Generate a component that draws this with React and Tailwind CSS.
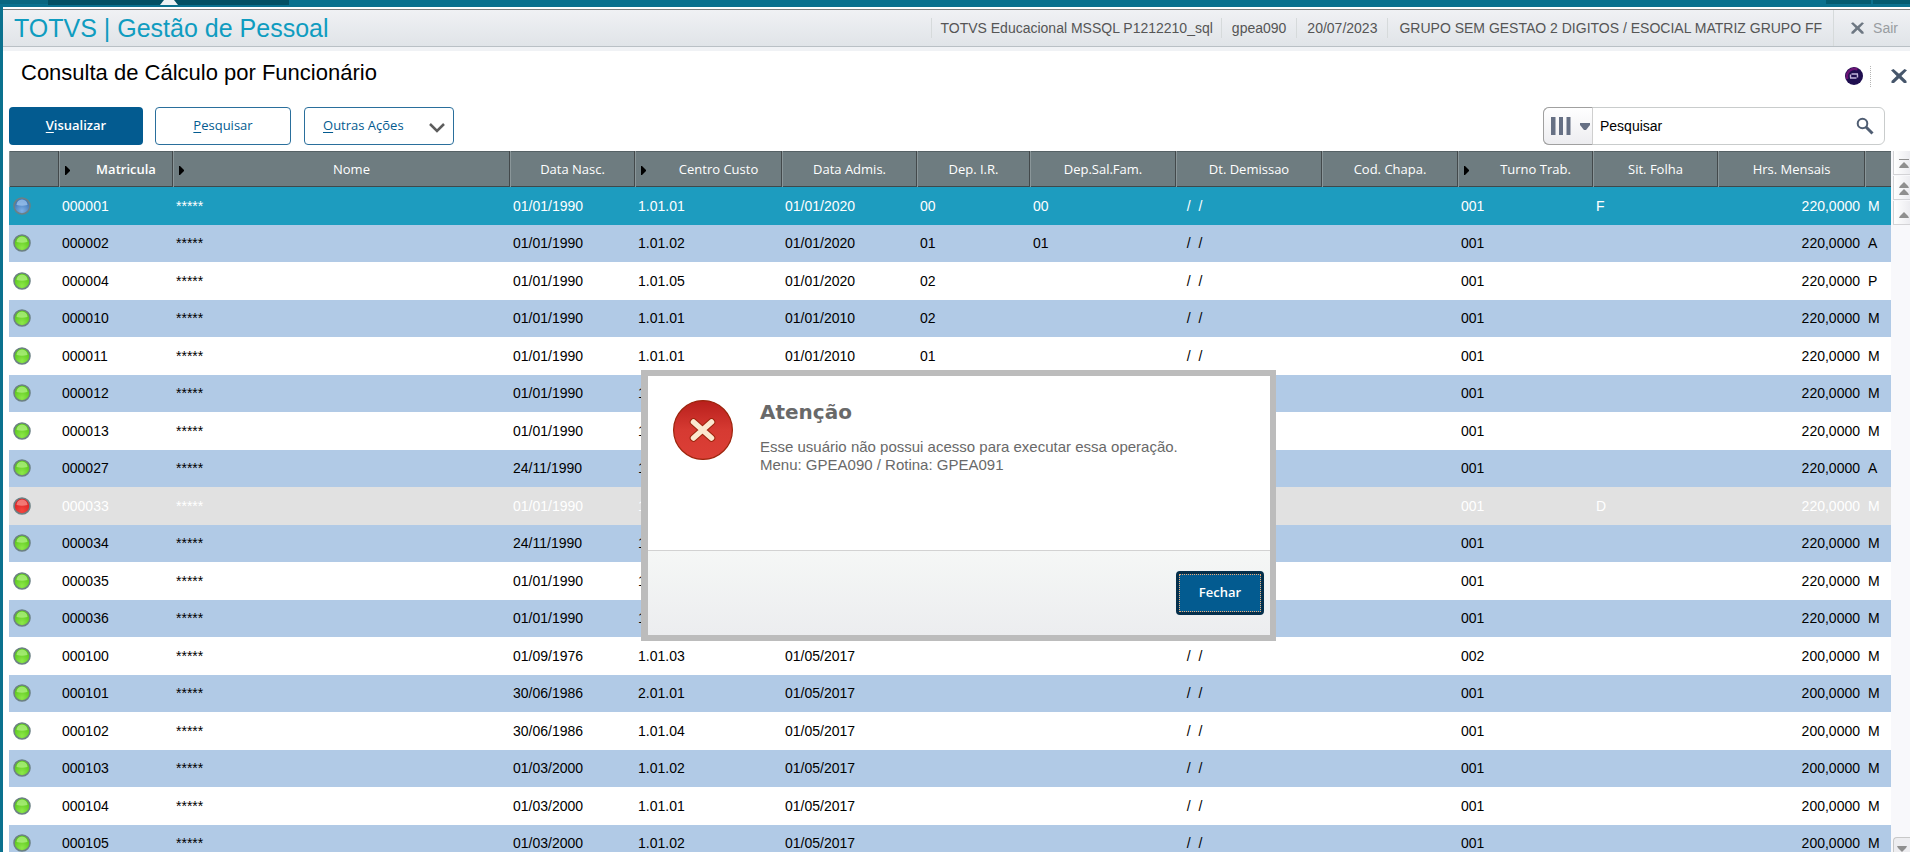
import React from 'react'
import clsx from 'clsx'

const COLUMNS = [
  { label: '', width: 'w-[50px]' },
  { label: 'Matricula', width: 'w-[114px]', arrow: true, bold: true },
  { label: 'Nome', width: '', arrow: true },
  { label: 'Data Nasc.', width: 'w-[125px]' },
  { label: 'Centro Custo', width: 'w-[147px]', arrow: true },
  { label: 'Data Admis.', width: 'w-[135px]' },
  { label: 'Dep. I.R.', width: 'w-[113px]' },
  { label: 'Dep.Sal.Fam.', width: 'w-[146px]' },
  { label: 'Dt. Demissao', width: 'w-[146px]' },
  { label: 'Cod. Chapa.', width: 'w-[136px]' },
  { label: 'Turno Trab.', width: 'w-[135px]', arrow: true },
  { label: 'Sit. Folha', width: 'w-[125px]' },
  { label: 'Hrs. Mensais', width: 'w-[147px]' },
  { label: '', width: 'w-[26px]' },
]

// status, matricula, nascimento, centro de custo, admissao, dep. ir, dep. sal. fam., turno, situacao, horas, categoria
const ROWS = [
  ['blue', '000001', '01/01/1990', '1.01.01', '01/01/2020', '00', '00', '001', 'F', '220,0000', 'M'],
  ['green', '000002', '01/01/1990', '1.01.02', '01/01/2020', '01', '01', '001', '', '220,0000', 'A'],
  ['green', '000004', '01/01/1990', '1.01.05', '01/01/2020', '02', '', '001', '', '220,0000', 'P'],
  ['green', '000010', '01/01/1990', '1.01.01', '01/01/2010', '02', '', '001', '', '220,0000', 'M'],
  ['green', '000011', '01/01/1990', '1.01.01', '01/01/2010', '01', '', '001', '', '220,0000', 'M'],
  ['green', '000012', '01/01/1990', '1.01.01', '', '', '', '001', '', '220,0000', 'M'],
  ['green', '000013', '01/01/1990', '1.01.01', '', '', '', '001', '', '220,0000', 'M'],
  ['green', '000027', '24/11/1990', '1.01.01', '', '', '', '001', '', '220,0000', 'A'],
  ['red', '000033', '01/01/1990', '1.01.01', '', '', '', '001', 'D', '220,0000', 'M'],
  ['green', '000034', '24/11/1990', '1.01.01', '', '', '', '001', '', '220,0000', 'M'],
  ['green', '000035', '01/01/1990', '1.01.01', '', '', '', '001', '', '220,0000', 'M'],
  ['green', '000036', '01/01/1990', '1.01.01', '', '', '', '001', '', '220,0000', 'M'],
  ['green', '000100', '01/09/1976', '1.01.03', '01/05/2017', '', '', '002', '', '200,0000', 'M'],
  ['green', '000101', '30/06/1986', '2.01.01', '01/05/2017', '', '', '001', '', '200,0000', 'M'],
  ['green', '000102', '30/06/1986', '1.01.04', '01/05/2017', '', '', '001', '', '200,0000', 'M'],
  ['green', '000103', '01/03/2000', '1.01.02', '01/05/2017', '', '', '001', '', '200,0000', 'M'],
  ['green', '000104', '01/03/2000', '1.01.01', '01/05/2017', '', '', '001', '', '200,0000', 'M'],
  ['green', '000105', '01/03/2000', '1.01.02', '01/05/2017', '', '', '001', '', '200,0000', 'M'],
]

const BALL_COLORS = {
  blue: ['#4179b8', '#7fb0e6', '#a5cbf2'],
  green: ['#5cc81c', '#8de84a', '#b8f48c'],
  red: ['#dd2424', '#f4473f', '#f99a94'],
}

function BallGradients() {
  return (
    <svg className="absolute size-0" aria-hidden="true">
      <defs>
        {Object.entries(BALL_COLORS).map(([name, [dark, light]]) => (
          <radialGradient key={name} id={`ball-${name}`} cx="0.5" cy="0.8" r="0.6">
            <stop offset="0" stopColor={light} />
            <stop offset="1" stopColor={dark} />
          </radialGradient>
        ))}
      </defs>
    </svg>
  )
}

function StatusBall({ color }) {
  return (
    <svg viewBox="0 0 18 18" className="block size-[18px]" role="img" aria-label={color}>
      <circle cx="9" cy="9" r="8" fill={`url(#ball-${color})`} stroke="#6c8084" strokeWidth="1.6" />
      <path d="M3.500 8a5.500 5.500 0 0 1 11 0q-5.500 1.600-11 0z" fill={BALL_COLORS[color][2]} opacity="0.7" />
    </svg>
  )
}

function CrossIcon({ className }) {
  return (
    <svg viewBox="0 0 16 14" className={className} aria-hidden="true">
      <path
        d="M0 1.200L2.500 0 8 4.800 13.500 0 16 1.200 10.400 7 15.500 12v2h-2.500L8 9.200 3 14H.5v-2L5.600 7z"
        fill="currentColor"
      />
    </svg>
  )
}

function TopBar() {
  return (
    <div className="flex h-[7px] shrink-0 items-start bg-[#0b718e]">
      <span className="h-1 w-12 bg-[#0a6780]" />
      <span className="flex h-[5px] w-[241px] justify-center bg-[#045063]">
        <svg viewBox="0 0 18 5" className="h-[5px] w-[18px]" aria-hidden="true">
          <path d="M0 5l4-5h10L18 5z" fill="#eef1f3" />
        </svg>
      </span>
      <span className="ml-auto h-1 w-[45px] bg-[#045b70]" />
      <span className="ml-0.5 h-1 w-[37px] bg-[#045b70]" />
    </div>
  )
}

function AppHeader() {
  return (
    <header className="flex h-[44px] shrink-0 flex-col border-b-4 border-[#f0f2f5] bg-white pt-0.5">
      <div className="flex flex-1 items-center border-t border-b border-t-[#808080] border-b-[#b9c0c5] bg-linear-to-b from-[#f0f1f4] to-[#e0e4e8] text-sm text-[#555]">
        <h1 className="ml-[11px] text-[25px]/8 text-[#0f9cc0]">TOTVS | Gestão de Pessoal</h1>
        <span className="ml-auto border-l border-[#d6dadb] px-2">TOTVS Educacional MSSQL P1212210_sql</span>
        <span className="border-l border-[#d6dadb] px-[10px]">gpea090</span>
        <span className="border-l border-[#d6dadb] px-[10px]">20/07/2023</span>
        <span className="border-l border-[#d6dadb] px-[11px]">
          GRUPO SEM GESTAO 2 DIGITOS / ESOCIAL MATRIZ GRUPO FF
        </span>
        <button className="flex h-full items-center gap-[9px] border-l border-[#d6dadb] pr-3 pl-[17px] text-[#999da1]">
          <CrossIcon className="h-3 w-[13px] text-[#6d7782]" />
          Sair
        </button>
      </div>
    </header>
  )
}

function PageTitle() {
  return (
    <div className="mb-1.5 flex h-[50px] shrink-0 items-center pr-[3px] pl-[18px]">
      <h2 className="mb-1.5 text-[22px]/8 text-black">Consulta de Cálculo por Funcionário</h2>
      <button className="ml-auto" aria-label="Assistente">
        <svg viewBox="0 0 18 18" className="size-[18px]" aria-hidden="true">
          <circle cx="9" cy="9" r="9" fill="#1f0e50" />
          <path d="M2.500 12a7.500 7.500 0 0 1 10-9.600" stroke="#6b1474" strokeWidth="2.400" fill="none" />
          <path d="M6.500 7h6.500M5 11h6.500M5.500 7.500v3M12.500 7.500v3" stroke="#c4b6dc" strokeWidth="1.400" fill="none" />
        </svg>
      </button>
      <span className="mr-5 ml-[7px] h-[21px] border-l border-dotted border-[#b5b5b5]" />
      <button aria-label="Fechar tela">
        <CrossIcon className="h-[14px] w-4 text-[#46566b]" />
      </button>
    </div>
  )
}

function Toolbar() {
  return (
    <div className="flex h-[38px] shrink-0 pr-[25px] pl-1.5 font-['Open_Sans',sans-serif] text-[13px] text-[#035b90]">
      <button className="w-[134px] rounded bg-[#035b90] font-semibold text-white">
        <u className="underline-offset-2">V</u>isualizar
      </button>
      <button className="ml-3 w-[136px] rounded border border-[#2a6f9c] bg-white">
        <u className="underline-offset-2">P</u>esquisar
      </button>
      <button className="ml-[13px] flex w-[150px] items-center justify-between rounded border border-[#2a6f9c] bg-white pr-2 pl-[18px]">
        <span>
          <u className="underline-offset-2">O</u>utras Ações
        </span>
        <svg viewBox="0 0 16 10" className="mt-1 h-[10px] w-4" aria-hidden="true">
          <path d="M1 1l7 7 7-7" stroke="#5d5d5d" strokeWidth="2.500" fill="none" />
        </svg>
      </button>
      <div className="ml-auto flex w-[342px] rounded-md border border-[#c9cccc] bg-white">
        <button
          className="-my-px -ml-px flex w-[50px] items-center justify-between rounded-l-md border border-[#a0a0a0] border-r-[#cfcfcf] bg-linear-to-b from-white to-[#ededf0] pr-0.5 pl-[7px]"
          aria-label="Colunas"
        >
          <svg viewBox="0 0 20 18" className="h-[18px] w-5" aria-hidden="true">
            <path d="M0 0h4.500v18H0zM8 0h4v18H8zM15.500 0h4v18h-4z" fill="#667084" />
          </svg>
          <svg viewBox="0 0 10 7" className="h-[7px] w-[10px]" aria-hidden="true">
            <path d="M0 0h10v2L6 7H4L0 2z" fill="#667084" />
          </svg>
        </button>
        <input
          className="min-w-0 flex-1 px-[7px] font-['Liberation_Sans',Arial,sans-serif] text-sm text-black outline-none"
          aria-label="Pesquisar"
          defaultValue="Pesquisar"
        />
        <button className="pr-[10px]" aria-label="Buscar">
          <svg viewBox="0 0 18 18" className="size-[18px]" aria-hidden="true">
            <circle cx="6.500" cy="6.500" r="4.800" stroke="#4f5d72" strokeWidth="2" fill="none" />
            <path d="M10 10l6.500 6.500" stroke="#4f5d72" strokeWidth="3" />
          </svg>
        </button>
      </div>
    </div>
  )
}

function EmployeeTable() {
  return (
    <table className="w-full table-fixed border-collapse text-sm text-black">
      <colgroup>
        {COLUMNS.map((col, i) => (
          <col key={i} className={col.width} />
        ))}
      </colgroup>
      <thead>
        <tr className="h-9 bg-[#6e7c80] font-['Open_Sans',sans-serif] text-[13px] text-white shadow-[inset_0_1px_0_#566266,inset_0_-1px_0_#3f484b]">
          {COLUMNS.map((col, i) => (
            <th
              key={i}
              className={clsx(
                'p-0 shadow-[inset_-1px_0_0_#43494b,inset_1px_0_0_#8a9699] last:shadow-[inset_1px_0_0_#8a9699]',
                col.bold ? 'font-semibold' : 'font-normal'
              )}
            >
              <span className="flex items-center">
                {col.arrow && (
                  <svg viewBox="0 0 5 9" className="mt-0.5 mr-[9px] ml-1.5 h-[9px] w-[5px]" aria-hidden="true">
                    <path d="M0 0h1L5 4v1L1 9H0z" fill="#000" />
                  </svg>
                )}
                <span className="flex-1 text-center">{col.label}</span>
              </span>
            </th>
          ))}
        </tr>
      </thead>
      <tbody>
        {ROWS.map(([status, id, birth, center, admission, depIr, depFam, shift, situation, hours, category], i) => (
          <tr
            key={id}
            className={clsx(
              '[&>td]:p-0 [&>td]:pl-[3px] [&>td]:whitespace-pre',
              i % 2 ? 'h-[37px] [&>td]:pb-px' : 'h-[38px]',
              status === 'blue' && 'bg-[#1d9cbf] text-white',
              status === 'red' && 'bg-[#e1e1e1] text-white',
              status === 'green' && (i % 2 ? 'bg-[#b1cae6]' : 'bg-white')
            )}
          >
            <td className="pl-1!">
              <StatusBall color={status} />
            </td>
            <td>{id}</td>
            <td>*****</td>
            <td>{birth}</td>
            <td>{center}</td>
            <td>{admission}</td>
            <td>{depIr}</td>
            <td>{depFam}</td>
            <td>{'  /  /  '}</td>
            <td></td>
            <td>{shift}</td>
            <td>{situation}</td>
            <td className="pr-[5px]! text-right">{hours}</td>
            <td>{category}</td>
          </tr>
        ))}
      </tbody>
    </table>
  )
}

function ScrollButton({ label, path }) {
  return (
    <button
      className="flex h-6 w-full items-center justify-end border-b border-l border-[#d3d3d6] bg-linear-to-r from-white to-[#ececf0] pr-px"
      aria-label={label}
    >
      <svg viewBox="0 0 10 14" className="h-[14px] w-[10px]" aria-hidden="true">
        <path d={path} fill="#8f8f8f" />
      </svg>
    </button>
  )
}

function ScrollColumn() {
  return (
    <div className="flex w-[19px] shrink-0 flex-col gap-px bg-[#f8f8fb] pl-0.5">
      <ScrollButton label="Primeiro registro" path="M0 3h10v1H0zM5 6l4 4 1 2H0l1-2z" />
      <ScrollButton label="Página anterior" path="M5 1l4 4 1 2H0l1-2zM5 8l4 4 1 2H0l1-2z" />
      <ScrollButton label="Registro anterior" path="M5 6l4 4 1 2H0l1-2z" />
      <button
        className="mt-auto flex h-[15px] items-end justify-center rounded-tl border-t border-l border-[#c8c8c8] bg-[#ededf0]"
        aria-label="Próximo registro"
      >
        <svg viewBox="0 0 10 6" className="h-1.5 w-[10px]" aria-hidden="true">
          <path d="M0 0h10L9 2 5 6 1 2z" fill="#8f8f8f" />
        </svg>
      </button>
    </div>
  )
}

function AccessDialog() {
  return (
    <div className="absolute inset-0 flex items-center justify-center pt-[159px] pl-[7px]">
      <div
        role="alertdialog"
        aria-labelledby="dialog-title"
        className="flex w-[635px] flex-col border-6 border-l-7 border-[#bcbcbc] bg-white text-[#696969]"
      >
        <div className="flex min-h-[174px] gap-[27px] pt-6 pr-6 pl-[25px]">
          <svg viewBox="0 0 60 60" className="size-[60px] shrink-0" aria-hidden="true">
            <defs>
              <linearGradient id="alert" x1="0" y1="0" x2="0" y2="1">
                <stop offset="0" stopColor="#b81f1c" />
                <stop offset="0.500" stopColor="#d63a32" />
                <stop offset="1" stopColor="#dc3f36" />
              </linearGradient>
            </defs>
            <circle cx="30" cy="30" r="29.400" fill="url(#alert)" stroke="#9c240c" strokeWidth="1.200" />
            <path d="M20.500 22L38.500 38M38.500 22L20.500 38" stroke="#9c240c" strokeWidth="7.500" strokeLinecap="round" />
            <path d="M20.500 22L38.500 38M38.500 22L20.500 38" stroke="#fbe8d0" strokeWidth="5.500" strokeLinecap="round" />
          </svg>
          <div>
            <h3 id="dialog-title" className="font-['DejaVu_Sans',sans-serif] text-xl/6 font-bold">
              Atenção
            </h3>
            <p className="mt-[14px] text-[15px]/[18px]">
              Esse usuário não possui acesso para executar essa operação.
              <br />
              Menu: GPEA090 / Rotina: GPEA091
            </p>
          </div>
        </div>
        <div className="flex justify-end border-t border-[#d2d2d2] bg-linear-to-b from-[#f5f7f6] to-[#ecedef] pt-5 pr-1.5 pb-5">
          <button className="h-11 w-[88px] rounded border-3 border-[#052f4b] bg-[#035b90] font-['Open_Sans',sans-serif] text-[13px] font-semibold text-white outline-1 -outline-offset-4 outline-dotted outline-[#f3ae78]">
            Fechar
          </button>
        </div>
      </div>
    </div>
  )
}

export default function App() {
  return (
    <div className="relative flex h-screen flex-col overflow-hidden bg-white font-['Liberation_Sans',Arial,sans-serif]">
      <BallGradients />
      <TopBar />
      <main className="flex min-h-0 flex-1 flex-col border-l-3 border-[#0b718e]">
        <AppHeader />
        <PageTitle />
        <Toolbar />
        <div className="mt-1.5 flex min-h-0 flex-1 pl-1.5">
          <div className="min-w-0 flex-1 overflow-hidden">
            <EmployeeTable />
          </div>
          <ScrollColumn />
        </div>
      </main>
      <AccessDialog />
    </div>
  )
}
